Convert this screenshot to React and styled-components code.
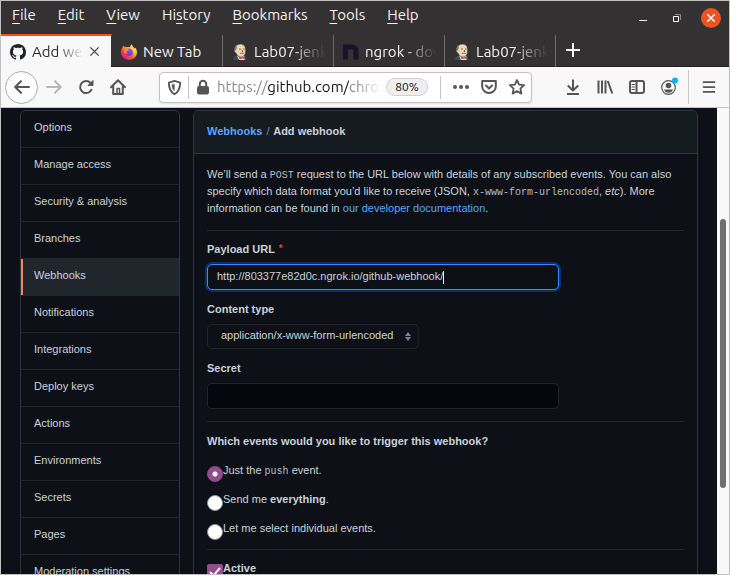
import React, { useState } from "react";
import styled, { createGlobalStyle } from "styled-components";

const ui = `"Ubuntu", "Noto Sans", "Open Sans", sans-serif`;
const body = `"Liberation Sans", Arial, sans-serif`;
const mono = `"Liberation Mono", monospace`;

const GlobalStyle = createGlobalStyle`
  *, *::before, *::after { box-sizing: border-box; }
  body { margin: 0; background: #0d1117; }
  button, input, select { font: inherit; color: inherit; margin: 0; }
  button { background: none; border: 0; padding: 0; }
  p, h1, h2, ul { margin: 0; padding: 0; }
`;

/* ---------- browser window ---------- */

const Window = styled.div`
  display: flex;
  flex-direction: column;
  height: 100vh;
  overflow: hidden;
  border: 1px solid #c0c1bf;
  font-family: ${ui};
`;

const TitleBar = styled.header`
  display: flex;
  justify-content: space-between;
  flex: none;
  height: 33px;
  padding: 0 8px 0 11px;
  background: #333132;
  color: #f4f3f2;
`;

const Menus = styled.nav`
  display: flex;
  align-items: center;
  gap: 22px;
  padding-bottom: 5px;
`;

const MenuButton = styled.button`
  font-size: 15px;
  line-height: 20px;
  u { text-underline-offset: 3px; }
`;

const WindowButtons = styled.div`
  display: flex;
  align-items: center;
  gap: 14px;
`;

const WindowButton = styled.button`
  display: grid;
  place-items: center;
  width: 20px;
  height: 20px;
  border-radius: 50%;
  background: ${(p) => (p.$close ? "#e95420" : "transparent")};
  color: #fff;
  svg { display: block; }
`;

const TabStrip = styled.div`
  display: flex;
  flex: none;
  height: 33px;
  background: #333132;
  color: #f4f3f2;
  box-shadow: inset 0 -1px #1f1d1e;
`;

const Tab = styled.div`
  display: flex;
  align-items: center;
  gap: 6px;
  flex: 0 0 111px;
  min-width: 0;
  padding: 0 ${(p) => (p.$active ? 11 : 7)}px 0 9px;
  border-top: 2px solid ${(p) => (p.$active ? "#f25022" : "transparent")};
  border-right: 1px solid ${(p) => (p.$active ? "transparent" : "#6d6b6c")};
  background: ${(p) => (p.$active ? "#f8f8f8" : "transparent")};
  background-clip: ${(p) => (p.$active ? "padding-box" : "border-box")};
  color: ${(p) => (p.$active ? "#2c2b2c" : "#f4f3f2")};
  svg { flex: none; display: block; }
`;

const TabTitle = styled.button`
  flex: 1;
  min-width: 0;
  overflow: hidden;
  white-space: nowrap;
  text-align: left;
  font-size: 15px;
  line-height: 20px;
  ${(p) => p.$fade && "mask-image: linear-gradient(to right, #000 50%, transparent 100%);"}
`;

const PlainButton = styled.button`
  display: grid;
  place-items: center;
  flex: none;
  width: ${(p) => p.$width || 32}px;
  height: 32px;
  color: ${(p) => (p.$dim ? "#b8b8b8" : "#555557")};
  svg { display: block; }
`;

const TabClose = styled.button`
  display: grid;
  color: #4a4a4c;
`;

const NewTab = styled(PlainButton)`
  color: #f4f3f2;
`;

const ToolBar = styled.div`
  display: flex;
  align-items: center;
  flex: none;
  height: 41px;
  padding-left: 4px;
  background: #f8f8f8;
  border-bottom: 1px solid #c4c4c4;
`;

const BackButton = styled(PlainButton)`
  height: 33px;
  border: 1px solid #acacac;
  border-radius: 50%;
  background: #fdfdfd;
`;

const AddressBar = styled.div`
  display: flex;
  align-items: center;
  flex: 1;
  min-width: 0;
  height: 31px;
  margin: 0 25px;
  border: 1px solid #c2c2c2;
  border-radius: 4px;
  background: #fff;
  box-shadow: 0 1px 2px #0000001a;
`;

const Divider = styled.span`
  flex: none;
  width: 1px;
  height: ${(p) => p.$height}px;
  background: #c6c6c6;
`;

const ToolIcons = styled.div`
  display: flex;
  margin-right: 3px;
`;

const PageActions = styled.div`
  display: flex;
  gap: 12px;
  padding: 0 6px 0 12px;
`;

const Address = styled.input`
  flex: 1;
  min-width: 0;
  border: 0;
  padding: 0;
  outline: 0;
  font-size: 15px;
  line-height: 22px;
  background: linear-gradient(
    to right,
    #858585 0 50px, #111 50px 132px, #858585 132px 140px, #85858500 164px
  );
  background-clip: text;
  -webkit-background-clip: text;
  -webkit-text-fill-color: transparent;
`;

const Zoom = styled.button`
  flex: none;
  width: 42px;
  height: 18px;
  margin: 0 12px 0 4px;
  border: 1px solid #cfcfcf;
  border-radius: 9px;
  background: #efeff0;
  color: #141414;
  font-size: 12px;
  line-height: 16px;
`;

/* ---------- page ---------- */

const Viewport = styled.div`
  display: flex;
  flex: 1;
  min-height: 0;
  background: #0d1117;
`;

const Page = styled.div`
  display: grid;
  grid-template-columns: 160px minmax(0, 1fr);
  align-items: start;
  gap: 13px;
  flex: 1;
  min-width: 0;
  overflow: hidden;
  padding: 2px 19px;
  color: #c9d1d9;
  font-family: ${body};
  font-size: 11px;
  line-height: 17px;
`;

const ScrollTrack = styled.div`
  flex: none;
  width: 12px;
  padding: 111px 3px 86px;
  background: #f8f8f8;
`;

const ScrollThumb = styled.div`
  height: 100%;
  border-radius: 3px;
  background: #6f6f6e;
`;

const SideNav = styled.nav`
  border: 1px solid #30363d;
  border-radius: 5px;
  overflow: hidden;
`;

const SideLink = styled.a`
  display: block;
  padding: 8px 13px 11px;
  border-bottom: 1px solid #21262d;
  background: ${(p) => (p.$active ? "#21262d" : "transparent")};
  box-shadow: ${(p) => (p.$active ? "inset 2px 0 #f78166" : "none")};
  color: #c9d1d9;
  text-decoration: none;
`;

const Panel = styled.main`
  border: 1px solid #30363d;
  border-radius: 5px;
  overflow: hidden;
`;

const PanelHead = styled.h1`
  padding: 12px 13px 13px;
  border-bottom: 1px solid #30363d;
  background: #161b22;
  font-size: 11px;
  font-weight: 700;
`;

const Slash = styled.span`
  padding: 0 1px;
  color: #6f8fb5;
  font-weight: 400;
`;

const Link = styled.a`
  color: #58a6ff;
  text-decoration: none;
`;

const PanelBody = styled.form`
  padding: 12px 13px;
`;

const Code = styled.code`
  color: #b4bbc3;
  font-family: ${mono};
  font-size: 10px;
  line-height: 1;
`;

const Rule = styled.hr`
  height: 1px;
  margin: ${(p) => p.$top || 13}px 0 10px;
  border: 0;
  background: #21262d;
`;

const Label = styled.label`
  display: block;
  margin-bottom: 6px;
  font-weight: 700;
  sup { color: #d9443f; font-size: 10px; line-height: 1; vertical-align: 1px; margin-left: 1px; }
`;

const Field = styled.div`
  margin-bottom: 11px;
`;

const InputFrame = styled.div`
  display: flex;
  align-items: center;
  width: 352px;
  max-width: 100%;
  height: 26px;
  padding: 0 9px 1px;
  border: 1px solid ${(p) => (p.$focused ? "#388bfd" : "#21262d")};
  border-radius: 5px;
  background: ${(p) => (p.$focused ? "#0d1117" : "#04070d")};
  box-shadow: ${(p) => (p.$focused ? "0 0 0 2px #0c2d6b" : "none")};
`;

const TextInput = styled.input`
  field-sizing: ${(p) => (p.$hug ? "content" : "fixed")};
  width: ${(p) => (p.$hug ? "auto" : "100%")};
  max-width: 100%;
  padding: 0;
  border: 0;
  outline: 0;
  background: none;
`;

const Caret = styled.span`
  width: 1px;
  height: 13px;
  margin-top: 2px;
  background: #e6edf3;
`;

const SelectWrap = styled.div`
  display: grid;
  align-items: center;
  width: 212px;
  > * { grid-area: 1 / 1; }
  svg { justify-self: end; margin-right: 8px; pointer-events: none; }
`;

const Select = styled.select`
  appearance: none;
  width: 100%;
  height: 25px;
  padding: 0 22px 2px 13px;
  border: 1px solid #21262d;
  border-radius: 5px;
  background: #0d1117;
`;

const Question = styled.h2`
  margin: 11px 0 12px;
  font-size: 11px;
  font-weight: 700;
`;

const Choices = styled.div`
  display: grid;
  gap: 9px;
`;

const Choice = styled.label`
  display: flex;
  align-items: flex-start;
`;

const Radio = styled.input`
  appearance: none;
  flex: none;
  width: 16px;
  height: 16px;
  margin-top: 4px;
  border: 1px solid #8f8f8f;
  border-radius: 50%;
  background: #fff;
  &:checked {
    border-color: #924d8b;
    background: radial-gradient(circle, #fff 2px, #924d8b 3px);
  }
`;

const CheckWrap = styled.span`
  display: grid;
  margin-top: 4px;
  > * { grid-area: 1 / 1; }
  svg { pointer-events: none; }
`;

const CheckBox = styled.input`
  appearance: none;
  width: 16px;
  height: 16px;
  border-radius: 2px;
  background: #fff;
  &:checked { background: #924d8b; }
`;

/* ---------- icons ---------- */

const Icon = ({ size = 16, w = 2, children, ...rest }) => (
  <svg width={size} height={size} viewBox="0 0 16 16" fill="none" stroke="currentColor"
    strokeWidth={w} strokeLinecap="round" strokeLinejoin="round" aria-hidden="true" {...rest}>
    {children}
  </svg>
);

const GitHubIcon = () => (
  <svg width="16" height="16" viewBox="0 0 16 16" fill="#1f2328" aria-hidden="true">
    <path d="M8 0C3.58 0 0 3.58 0 8c0 3.54 2.29 6.53 5.47 7.59.4.07.55-.17.55-.38 0-.19-.01-.82-.01-1.49-2.01.37-2.53-.49-2.69-.94-.09-.23-.48-.94-.82-1.13-.28-.15-.68-.52-.01-.53.63-.01 1.08.58 1.23.82.72 1.21 1.87.87 2.33.66.07-.52.28-.87.51-1.07-1.78-.2-3.64-.89-3.64-3.95 0-.87.31-1.59.82-2.15-.08-.2-.36-1.02.08-2.12 0 0 .67-.21 2.2.82.64-.18 1.32-.27 2-.27s1.36.09 2 .27c1.53-1.04 2.2-.82 2.2-.82.44 1.1.16 1.92.08 2.12.51.56.82 1.27.82 2.15 0 3.07-1.87 3.75-3.65 3.95.29.25.54.73.54 1.48 0 1.07-.01 1.93-.01 2.2 0 .21.15.46.55.38A8.01 8.01 0 0 0 16 8c0-4.42-3.58-8-8-8z" />
  </svg>
);

const FirefoxIcon = () => (
  <svg width="16" height="16" viewBox="0 0 16 16" aria-hidden="true">
    <defs>
      <linearGradient id="fox" x1="0.85" y1="0.1" x2="0.2" y2="0.9">
        <stop offset="0" stopColor="#fff44f" />
        <stop offset="0.35" stopColor="#ffb02a" />
        <stop offset="0.65" stopColor="#ff4f3a" />
        <stop offset="1" stopColor="#e31587" />
      </linearGradient>
      <linearGradient id="globe" x1="0.7" y1="0" x2="0.4" y2="1">
        <stop offset="0" stopColor="#a44af0" />
        <stop offset="1" stopColor="#4a4bc9" />
      </linearGradient>
    </defs>
    <path fill="url(#fox)" d="M10.3.2c1 .8 1.500 1.800 1.700 2.700.8.3 1.600.9 2 1.600.2-.3.200-.6.100-1C15.400 4.800 16 6.600 16 8.300 16 12.600 12.400 16 8 16S0 12.600 0 8.300c0-2 .6-3.700 1.600-5 0-.7.200-1.300.5-1.700.3.600.7 1 1.100 1.300.8-.1 1.700 0 2.400.4C6.700 3 8 3.100 8.900 3.200 9.400 2.300 9.600 1.200 10.300.2z" />
    <circle cx="8.200" cy="8.300" r="3.700" fill="url(#globe)" />
    <path fill="#ff8a2a" d="M3.600 5.300c1.400-.8 3.300-.5 4.300.8-.3.900-1.400 1-2.200 1.200-.5.800-.1 1.800.8 2.200-1.500.8-3.300-.7-3.300-2.200z" />
    <path fill="#ffd53c" d="M10.400 2.500c2.600 1.600 3.900 4.500 3.100 7.400-.5-2.400-1.600-4-3.500-4.600.7-.8.700-1.900.4-2.800z" />
  </svg>
);

const JenkinsIcon = () => (
  <svg width="16" height="16" viewBox="0 0 16 16" aria-hidden="true">
    <path fill="#335061" d="M1.200 16c.1-2.200 1-3.800 3.300-4.400l5 1.500 3-1.200c1.500.5 2 2.100 2.200 4.100z" />
    <path fill="#f0f0f0" d="M5 11.500 9 14l3.200-2.200.3 4.200H6.900z" />
    <path fill="#f0d6b7" stroke="#7d6350" strokeWidth=".4" d="M2.800 6C2.500 2.400 4.800.4 8.300.3c3.600 0 5.200 2.200 5 5.500.3 2.800-.2 5-2 6.500-1.800 1.200-4.500.6-6-1.200-.6-.7-.9-1.400-1-2.100C2.600 8.700 2.200 7.100 2.800 6z" />
    <path fill="#85776b" d="M2.600 6.600C2.200 3.600 3.200 1.500 5.400.7c-.6 1.300-.9 2.500-.8 3.800l-.7 2.100z" />
    <path stroke="#54402f" strokeWidth=".8" fill="none" d="M7 5h1.800M11 5h1.500M10.200 6l.6 1.800h-1" />
    <path stroke="#857568" strokeWidth="1" fill="none" d="M8 9.500c1.200-.4 2.700-.4 3.800 0" />
    <path fill="#d33833" d="m7.200 12.800 2.300.9 2.600-1.200.4 2.600-2.600-.6-2.400.9z" />
  </svg>
);

const NgrokIcon = () => (
  <svg width="16" height="16" viewBox="0 0 16 16" fill="none" stroke="#15142b" strokeWidth="5" aria-hidden="true">
    <path d="M2.500 15.500V.5M3 4c2-1.500 5-1.500 7-.9 2.500.6 3 2 3 4.400v8" />
  </svg>
);

const CloseIcon = ({ size = 10, w = 2.500 }) => (
  <Icon size={size} w={w} strokeLinecap="butt"><path d="M2 2l12 12M14 2 2 14" /></Icon>
);

/* ---------- data ---------- */

const menus = [["", "F", "ile"], ["", "E", "dit"], ["", "V", "iew"], ["Hi", "s", "tory"],
  ["", "B", "ookmarks"], ["", "T", "ools"], ["", "H", "elp"]];

const tabs = [
  { icon: GitHubIcon, title: "Add webhook", fade: true, active: true },
  { icon: FirefoxIcon, title: "New Tab" },
  { icon: JenkinsIcon, title: "Lab07-jenkins", fade: true },
  { icon: NgrokIcon, title: "ngrok - download", fade: true },
  { icon: JenkinsIcon, title: "Lab07-jenkins", fade: true },
];

const sections = ["Options", "Manage access", "Security & analysis", "Branches", "Webhooks",
  "Notifications", "Integrations", "Deploy keys", "Actions", "Environments", "Secrets",
  "Pages", "Moderation settings"];

/* ---------- parts ---------- */

function Browser({ children }) {
  return (
    <Window>
      <TitleBar>
        <Menus aria-label="Menu bar">
          {menus.map(([pre, key, rest]) => (
            <MenuButton key={key + rest}>{pre}<u>{key}</u>{rest}</MenuButton>
          ))}
        </Menus>
        <WindowButtons>
          <WindowButton aria-label="Minimize">
            <svg width="8" height="8"><path d="M0 6.500h8" stroke="#fff" /></svg>
          </WindowButton>
          <WindowButton aria-label="Restore">
            <svg width="8" height="8" fill="none" stroke="#fff">
              <path d="M.5 2.500h5v5h-5z" /><path d="M2 .5h5.500V6" stroke="#8d8b8c" />
            </svg>
          </WindowButton>
          <WindowButton $close aria-label="Close"><CloseIcon /></WindowButton>
        </WindowButtons>
      </TitleBar>
      <TabStrip>
        {tabs.map(({ icon: Glyph, title, fade, active }, i) => (
          <Tab key={i} $active={active}>
            <Glyph />
            <TabTitle $fade={fade}>{title}</TabTitle>
            {active && <TabClose aria-label="Close tab"><CloseIcon size={11} w={2} /></TabClose>}
          </Tab>
        ))}
        <NewTab $width={34} aria-label="New tab"><Icon strokeLinecap="butt"><path d="M8 1v14M1 8h14" /></Icon></NewTab>
      </TabStrip>
      <ToolBar>
        <BackButton $width={33} aria-label="Back"><Icon><path d="M15 8H1.500M7 2.200 1.200 8 7 13.800" /></Icon></BackButton>
        <PlainButton $dim aria-label="Forward"><Icon><path d="M1 8h13.500M9 2.200 14.800 8 9 13.800" /></Icon></PlainButton>
        <PlainButton aria-label="Reload">
          <Icon strokeLinecap="butt">
            <path d="M13.800 10A6 6 0 1 1 12.600 4L14 5.500" />
            <path d="M15 1.500V6.500h-5z" fill="currentColor" strokeWidth="1" />
          </Icon>
        </PlainButton>
        <PlainButton aria-label="Home">
          <Icon><path d="M1 8.200 8 1.200l7 7M3.200 7.500V15h9.600V7.500" /><path d="M7 14.500v-5h2.500v5" strokeWidth="1.500" /></Icon>
        </PlainButton>
        <AddressBar>
          <PlainButton $width={28} aria-label="Tracking protection">
            <Icon size={15}><path d="M8 1 14 2.800c0 6-1.500 10-6 12.200C3.500 12.800 2 8.800 2 2.800z" /><path d="M7.800 4.500v7C6 9.800 5.300 7.500 5.300 5.200z" fill="currentColor" strokeWidth=".5" /></Icon>
          </PlainButton>
          <Divider $height={23} />
          <PlainButton $width={28} aria-label="Connection secure">
            <Icon><rect x="3" y="8" width="10" height="6.500" rx="1" fill="currentColor" /><path d="M4.800 7.500V5a3.200 3.200 0 0 1 6.400 0v2.500" /></Icon>
          </PlainButton>
          <Address aria-label="Address" defaultValue="https://github.com/chromium" spellCheck={false} />
          <Zoom>80%</Zoom>
          <Divider $height={23} />
          <PageActions>
            <PlainButton $width={16} aria-label="Page actions">
              <svg width="16" height="4" fill="currentColor"><circle cx="2" cy="2" r="2" /><circle cx="8" cy="2" r="2" /><circle cx="14" cy="2" r="2" /></svg>
            </PlainButton>
            <PlainButton $width={16} aria-label="Save to Pocket">
              <Icon><path d="M1.200 2h13.600v5.500a6.800 6.500 0 0 1-13.600 0zM5 6.500l3 3 3-3" /></Icon>
            </PlainButton>
            <PlainButton $width={16} aria-label="Bookmark">
              <Icon w={1.800}><path d="m8 1 2.100 4.600 5 .6-3.700 3.400 1 5L8 12.100l-4.400 2.500 1-5L.9 6.200l5-.6z" /></Icon>
            </PlainButton>
          </PageActions>
        </AddressBar>
        <ToolIcons>
          <PlainButton aria-label="Downloads"><Icon strokeLinecap="butt"><path d="M8 .5v10.700M2.800 6.500 8 11.500l5.200-5M2 15h12" /></Icon></PlainButton>
          <PlainButton aria-label="Library"><Icon strokeLinecap="butt"><path d="M1.500 1.500v13M5 1.500v13M8.500 1.500v13M10.800 2l4.500 12.500" /></Icon></PlainButton>
          <PlainButton aria-label="Sidebar">
            <Icon><rect x="1" y="2" width="14" height="12" rx="2" /><path d="M7.500 2v12" /><path d="M3 5.500h2.500M3 8h2.500M3 10.500h2.500" strokeWidth="1" /></Icon>
          </PlainButton>
          <PlainButton aria-label="Account">
            <svg width="18" height="20" viewBox="0 0 18 20" fill="none" aria-hidden="true">
              <circle cx="8.500" cy="10.500" r="6.800" stroke="currentColor" strokeWidth="1.200" />
              <circle cx="8.500" cy="8.500" r="2.800" fill="currentColor" />
              <path d="M4 12.500h9c-.6 2-2.200 3.300-4.500 3.300S4.600 14.500 4 12.500z" fill="currentColor" />
              <circle cx="15" cy="3.500" r="3" fill="#00b3f4" />
            </svg>
          </PlainButton>
        </ToolIcons>
        <Divider $height={34} />
        <PlainButton $width={40} aria-label="Open menu"><Icon size={14} strokeLinecap="butt"><path d="M1 2.500h14M1 8h14M1 13.500h14" /></Icon></PlainButton>
      </ToolBar>
      <Viewport>
        {children}
        <ScrollTrack><ScrollThumb /></ScrollTrack>
      </Viewport>
    </Window>
  );
}

function WebhookForm() {
  const [url, setUrl] = useState("http://803377e82d0c.ngrok.io/github-webhook/");
  const [event, setEvent] = useState("push");
  const choices = [
    ["push", <>Just the <Code>push</Code> event.</>],
    ["all", <>Send me <b>everything</b>.</>],
    ["some", <>Let me select individual events.</>],
  ];
  return (
    <PanelBody>
      <p>
        We’ll send a <Code>POST</Code> request to the URL below with details of any
        subscribed events. You can also specify which data format you’d like to receive
        (JSON, <Code>x-www-form-urlencoded</Code>, <em>etc</em>). More information can be
        found in <Link href="#docs">our developer documentation</Link>.
      </p>
      <Rule />
      <Field>
        <Label htmlFor="url">Payload URL <sup>*</sup></Label>
        <InputFrame $focused>
          <TextInput $hug id="url" value={url} spellCheck={false} onChange={(e) => setUrl(e.target.value)} />
          <Caret />
        </InputFrame>
      </Field>
      <Field>
        <Label htmlFor="type">Content type</Label>
        <SelectWrap>
          <Select id="type">
            <option>application/x-www-form-urlencoded</option>
            <option>application/json</option>
          </Select>
          <svg width="6" height="9" viewBox="0 0 6 9" fill="#7d858e" aria-hidden="true"><path d="M3 0 6 4H0zM3 9 0 5h6z" /></svg>
        </SelectWrap>
      </Field>
      <Field>
        <Label htmlFor="secret">Secret</Label>
        <InputFrame><TextInput id="secret" /></InputFrame>
      </Field>
      <Rule $top={12} />
      <Question id="events">Which events would you like to trigger this webhook?</Question>
      <Choices role="radiogroup" aria-labelledby="events">
        {choices.map(([id, text]) => (
          <Choice key={id}>
            <Radio type="radio" name="event" checked={event === id} onChange={() => setEvent(id)} />
            <span>{text}</span>
          </Choice>
        ))}
      </Choices>
      <Rule $top={9} />
      <Choice>
        <CheckWrap>
          <CheckBox type="checkbox" defaultChecked />
          <Icon stroke="#fff"><path d="m3.500 8.500 3 3 6-7" /></Icon>
        </CheckWrap>
        <b>Active</b>
      </Choice>
    </PanelBody>
  );
}

export default function App() {
  return (
    <>
      <GlobalStyle />
      <Browser>
        <Page>
          <SideNav aria-label="Repository settings">
            {sections.map((name) => (
              <SideLink key={name} href="#settings" $active={name === "Webhooks"}>{name}</SideLink>
            ))}
          </SideNav>
          <Panel>
            <PanelHead><Link href="#webhooks">Webhooks</Link> <Slash>/</Slash> Add webhook</PanelHead>
            <WebhookForm />
          </Panel>
        </Page>
      </Browser>
    </>
  );
}
